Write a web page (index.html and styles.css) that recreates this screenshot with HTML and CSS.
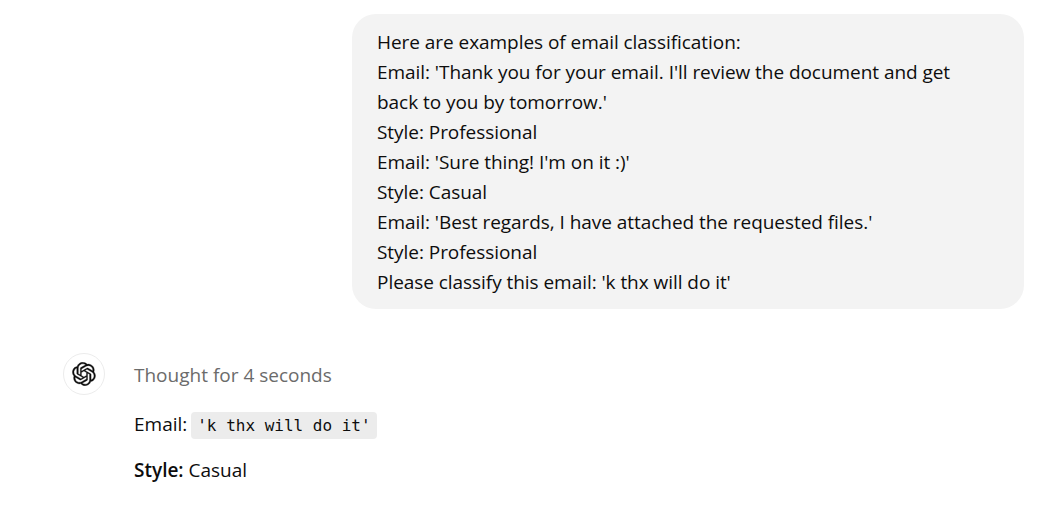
FILE: index.html
```html
<!DOCTYPE html>
<html lang="en">
<head>
<meta charset="utf-8">
<title>Chat</title>
<link rel="stylesheet" href="styles.css">
</head>
<body>
<main class="thread">
  <section class="user-row">
    <div class="bubble">
      <p>Here are examples of email classification:</p>
      <p>Email: 'Thank you for your email. I'll review the document and get back to you by tomorrow.'</p>
      <p>Style: Professional</p>
      <p>Email: 'Sure thing! I'm on it :)'</p>
      <p>Style: Casual</p>
      <p>Email: 'Best regards, I have attached the requested files.'</p>
      <p>Style: Professional</p>
      <p>Please classify this email: 'k thx will do it'</p>
    </div>
  </section>
  <section class="assistant-row">
    <div class="avatar">
      <svg class="logo" viewBox="0 0 41 41" fill="currentColor" stroke="currentColor" stroke-width="0.6" aria-hidden="true"><path d="M37.5324 16.8707C37.9808 15.5241 38.1363 14.0974 37.9886 12.6859C37.8409 11.2744 37.3934 9.91076 36.676 8.68622C35.6126 6.83404 33.9882 5.3676 32.0373 4.4985C30.0864 3.62941 27.9098 3.40259 25.8215 3.85078C24.8796 2.7893 23.7219 1.94125 22.4257 1.36341C21.1295 0.785575 19.7249 0.491269 18.3058 0.500197C16.1708 0.495044 14.0893 1.16803 12.3614 2.42214C10.6335 3.67624 9.34853 5.44666 8.6917 7.47815C7.30085 7.76286 5.98686 8.3414 4.8377 9.17505C3.68854 10.0087 2.73073 11.0782 2.02839 12.312C0.956464 14.1591 0.498905 16.2988 0.721698 18.4228C0.944492 20.5467 1.83612 22.5449 3.268 24.1293C2.81966 25.4759 2.66413 26.9026 2.81182 28.3141C2.95951 29.7256 3.40701 31.0892 4.12437 32.3138C5.18791 34.1659 6.8123 35.6322 8.76321 36.5013C10.7141 37.3704 12.8907 37.5973 14.9789 37.1492C15.9208 38.2107 17.0786 39.0587 18.3747 39.6366C19.6709 40.2144 21.0755 40.5087 22.4946 40.4998C24.6307 40.5054 26.7133 39.8321 28.4418 38.5772C30.1704 37.3223 31.4556 35.5506 32.1119 33.5179C33.5027 33.2332 34.8167 32.6547 35.9659 31.821C37.115 30.9874 38.0728 29.9178 38.7752 28.684C39.8458 26.8371 40.3023 24.6979 40.0789 22.5748C39.8556 20.4517 38.9639 18.4544 37.5324 16.8707ZM22.4978 37.8849C20.7443 37.8874 19.0459 37.2733 17.6994 36.1501C17.7601 36.117 17.8666 36.0586 17.936 36.0161L25.9004 31.4156C26.1003 31.3019 26.2663 31.137 26.3813 30.9378C26.4964 30.7386 26.5563 30.5124 26.5549 30.2825V19.0542L29.9213 20.998C29.9389 21.0068 29.9541 21.0198 29.9656 21.0359C29.977 21.052 29.9842 21.0707 29.9867 21.0902V30.3889C29.9842 32.375 29.1946 34.2791 27.7909 35.6841C26.3872 37.0892 24.4838 37.8806 22.4978 37.8849ZM6.39227 31.0064C5.51397 29.4888 5.19742 27.7107 5.49804 25.9832C5.55718 26.0187 5.66048 26.0818 5.73461 26.1244L13.699 30.7248C13.8975 30.8408 14.1233 30.902 14.3532 30.902C14.583 30.902 14.8088 30.8408 15.0073 30.7248L24.731 25.1103V28.9979C24.7321 29.0177 24.7283 29.0376 24.7199 29.0556C24.7115 29.0736 24.6988 29.0893 24.6829 29.1012L16.6317 33.7497C14.9096 34.7416 12.8643 35.0097 10.9447 34.4954C9.02506 33.9811 7.38785 32.7263 6.39227 31.0064ZM4.29707 13.6194C5.17156 12.0998 6.55279 10.9364 8.19885 10.3327C8.19885 10.4013 8.19491 10.5228 8.19491 10.6071V19.808C8.19351 20.0378 8.25334 20.2638 8.36823 20.4629C8.48312 20.6619 8.64893 20.8267 8.84863 20.9404L18.5723 26.5542L15.206 28.4979C15.1894 28.5089 15.1703 28.5155 15.1505 28.5173C15.1307 28.5191 15.1107 28.516 15.0924 28.5082L7.04046 23.8557C5.32135 22.8601 4.06716 21.2235 3.55289 19.3046C3.03862 17.3858 3.30624 15.3413 4.29707 13.6194ZM31.955 20.0556L22.2312 14.4411L25.5976 12.4981C25.6142 12.4872 25.6333 12.4805 25.6531 12.4787C25.6729 12.4769 25.6928 12.4801 25.7111 12.4879L33.7631 17.1364C34.9967 17.849 36.0017 18.8982 36.6606 20.1613C37.3194 21.4244 37.6047 22.849 37.4832 24.2684C37.3617 25.6878 36.8382 27.0432 35.9743 28.1759C35.1103 29.3086 33.9415 30.1717 32.6047 30.6641C32.6047 30.5947 32.6047 30.4733 32.6047 30.3889V21.188C32.6066 20.9586 32.5474 20.7328 32.4332 20.5338C32.319 20.3348 32.154 20.1698 31.955 20.0556ZM35.3055 15.0128C35.2464 14.9765 35.1431 14.9142 35.069 14.8717L27.1045 10.2712C26.906 10.1554 26.6803 10.0943 26.4504 10.0943C26.2206 10.0943 25.9948 10.1554 25.7963 10.2712L16.0726 15.8858V11.9982C16.0715 11.9783 16.0753 11.9585 16.0837 11.9405C16.0921 11.9225 16.1048 11.9068 16.1207 11.8949L24.1719 7.25025C25.4053 6.53903 26.8158 6.19376 28.2383 6.25482C29.6608 6.31589 31.0364 6.78077 32.2044 7.59508C33.3723 8.40939 34.2842 9.53945 34.8334 10.8531C35.3826 12.1667 35.5464 13.6095 35.3055 15.0128ZM14.2424 21.9419L10.8752 19.9981C10.8576 19.9893 10.8423 19.9763 10.8309 19.9602C10.8195 19.9441 10.8122 19.9254 10.8098 19.9058V10.6071C10.8107 9.18295 11.2173 7.78848 11.9819 6.58696C12.7466 5.38544 13.8377 4.42659 15.1275 3.82264C16.4173 3.21869 17.8524 2.99464 19.2649 3.1767C20.6775 3.35876 22.0089 3.93941 23.1034 4.85067C23.0427 4.88379 22.937 4.94215 22.8668 4.98473L14.9024 9.58517C14.7025 9.69878 14.5366 9.86356 14.4215 10.0626C14.3065 10.2616 14.2466 10.4877 14.2479 10.7175L14.2424 21.9419ZM16.071 17.9991L20.4018 15.4978L24.7325 17.9975V22.9985L20.4018 25.4983L16.071 22.9985V17.9991Z"/></svg>
    </div>
    <div class="content">
      <div class="thought">Thought for 4 seconds</div>
      <p class="answer answer-email">Email: <code>'k thx will do it'</code></p>
      <p class="answer"><strong>Style:</strong> Casual</p>
    </div>
  </section>
</main>
</body>
</html>
```

FILE: styles.css
```css
* { box-sizing: border-box; }
html, body { margin: 0; padding: 0; background: #fff; }
body {
  width: 1053px;
  height: 510px;
  overflow: hidden;
  color: #0d0d0d;
  font-family: "Open Sans", "Noto Sans", sans-serif;
  font-size: 19px;
  line-height: 30px;
}
.thread { padding: 14px 29px 0 63px; }
.user-row { display: flex; justify-content: flex-end; }
.bubble {
  width: 672px;
  padding: 13px 60px 12px 25px;
  background: #f3f3f3;
  border-radius: 24px;
  letter-spacing: -0.05px;
}
.bubble p, .answer { margin: 0; }
.assistant-row { display: flex; gap: 29px; margin-top: 44px; }
.avatar {
  width: 42px;
  height: 42px;
  flex: none;
  display: flex;
  align-items: center;
  justify-content: center;
  border: 1px solid #ececec;
  border-radius: 50%;
  color: #0d0d0d;
}
.logo { width: 24px; height: 24px; }
.content { padding-top: 8px; margin-top: -1px; }
.thought { color: #6b6b6b; height: 30px; margin-bottom: 19px; }
.answer + .answer { margin-top: 16px; }
.answer-email { word-spacing: -1px; }
.answer-email + .answer { margin-top: 16px; position: static; line-height: 26px; }
code {
  font-family: "DejaVu Sans Mono", monospace;
  font-size: 16px;
  background: #ececec;
  border-radius: 4px;
  padding: 4px 6px;
  word-spacing: 0;
}
strong { font-weight: 600; }
```
